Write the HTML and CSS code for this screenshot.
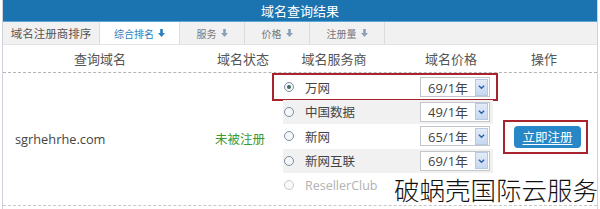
FILE: index.html
```html
<!DOCTYPE html>
<html lang="zh-CN">
<head>
<meta charset="utf-8">
<title>域名查询结果</title>
<link rel="stylesheet" href="styles.css">
</head>
<body>
<div class="panel">
  <div class="title">域名查询结果</div>
  <div class="tabs">
    <div class="tab tab-label">域名注册商排序</div>
    <div class="tab tab-active">综合排名 <svg class="arr" viewBox="0 0 8 9"><path d="M2.5 0h3v4.5H8L4 9 0 4.5h2.5z"/></svg></div>
    <div class="tab tab-w65">服务 <svg class="arr" viewBox="0 0 8 9"><path d="M2.5 0h3v4.5H8L4 9 0 4.5h2.5z"/></svg></div>
    <div class="tab tab-w65">价格 <svg class="arr" viewBox="0 0 8 9"><path d="M2.5 0h3v4.5H8L4 9 0 4.5h2.5z"/></svg></div>
    <div class="tab tab-w75">注册量 <svg class="arr" viewBox="0 0 8 9"><path d="M2.5 0h3v4.5H8L4 9 0 4.5h2.5z"/></svg></div>
  </div>
  <div class="thead">
    <div class="th">查询域名</div>
    <div class="th">域名状态</div>
    <div class="th">域名服务商</div>
    <div class="th">域名价格</div>
    <div class="th th-op">操作</div>
  </div>
  <div class="tbody">
    <div class="c-domain">sgrhehrhe.com</div>
    <div class="c-status">未被注册</div>
    <div class="c-prov">
      <div class="prow prow-hl">
        <span class="radio radio-on"></span><span class="pname">万网</span>
        <span class="sel"><span class="sel-val">69/1年</span><span class="sel-btn"><svg viewBox="0 0 8 6"><path d="M1 1.5l3 3 3-3" fill="none" stroke-width="1.6"/></svg></span></span>
      </div>
      <div class="prow prow-alt">
        <span class="radio"></span><span class="pname">中国数据</span>
        <span class="sel"><span class="sel-val">49/1年</span><span class="sel-btn"><svg viewBox="0 0 8 6"><path d="M1 1.5l3 3 3-3" fill="none" stroke-width="1.6"/></svg></span></span>
      </div>
      <div class="prow">
        <span class="radio"></span><span class="pname">新网</span>
        <span class="sel"><span class="sel-val">65/1年</span><span class="sel-btn"><svg viewBox="0 0 8 6"><path d="M1 1.5l3 3 3-3" fill="none" stroke-width="1.6"/></svg></span></span>
      </div>
      <div class="prow prow-alt">
        <span class="radio"></span><span class="pname">新网互联</span>
        <span class="sel"><span class="sel-val">69/1年</span><span class="sel-btn"><svg viewBox="0 0 8 6"><path d="M1 1.5l3 3 3-3" fill="none" stroke-width="1.6"/></svg></span></span>
      </div>
      <div class="prow prow-dis">
        <span class="radio radio-dis"></span><span class="pname">ResellerClub</span>
      </div>
    </div>
    <div class="c-op">
      <span class="hl-box"><a class="btn">立即注册</a></span>
    </div>
  </div>
  <div class="watermark">破蜗壳国际云服务</div>
</div>
</body>
</html>
```

FILE: styles.css
```css
* { box-sizing: border-box; }
html, body { margin: 0; padding: 0; background: #fff; }
body {
  font-family: "Open Sans", "Noto Sans CJK SC", sans-serif;
  color: #444;
  width: 600px;
  height: 209px;
  overflow: hidden;
}
.panel {
  position: relative;
  margin-left: 2px;
  width: 596px;
  height: 209px;
  border-left: 1px solid #cdd3d8;
  border-right: 1px solid #cdd3d8;
}
.title {
  height: 22px;
  line-height: 22px;
  background: #1b74b0;
  color: #fff;
  font-family: "Noto Sans CJK SC", sans-serif;
  font-size: 13px;
  text-align: center;
  border-bottom: 1px solid #5ea6d4;
}
.tabs {
  display: flex;
  height: 23px;
  background: #f1f1f1;
  border-bottom: 1px solid #e2e2e2;
}
.tab {
  display: flex;
  align-items: center;
  justify-content: center;
  gap: 4px;
  border-right: 1px solid #dcdcdc;
  font-family: "Noto Sans CJK SC", sans-serif;
  font-size: 10px;
  color: #777;
}
.tab-label { width: 97px; font-size: 11.5px; color: #555; }
.tab-active { width: 80px; background: #fff; color: #2c7fbf; }
.tab-w65 { width: 65px; }
.tab-w75 { width: 75px; }
.arr { width: 7px; height: 8px; fill: #8aa0b8; }
.tab-active .arr { fill: #2c7fbf; }
.thead {
  display: grid;
  grid-template-columns: 194px 92px 90px 144px 1fr;
  height: 28px;
  align-items: center;
  border-bottom: 1px dashed #b5b5b5;
}
.th {
  text-align: center;
  font-family: "Noto Sans CJK SC", sans-serif;
  font-size: 13px;
  color: #555;
}
.th-op { text-align: left; padding-left: 8px; }
.tbody {
  display: grid;
  grid-template-columns: 194px 86px 214px 1fr;
  border-bottom: 1px dashed #c8c8c8;
}
.c-domain {
  align-self: center;
  padding-left: 12px;
  font-family: "Open Sans", sans-serif;
  font-size: 12.8px;
  color: #444;
}
.c-status {
  align-self: center;
  text-align: center;
  font-family: "Noto Sans CJK SC", sans-serif;
  font-size: 12.5px;
  color: #3a9b33;
}
.c-prov {
  padding: 2px 0 7px;
}
.prow {
  position: relative;
  display: flex;
  align-items: center;
  width: 210px;
  height: 24.5px;
  padding-left: 1px;
}
.prow-alt { background: #f1f1f1; }
.prow-hl::after {
  content: "";
  position: absolute;
  top: -2px;
  left: -11px;
  right: -5px;
  bottom: -1px;
  border: 2px solid #a8232d;
}
.radio {
  width: 10px;
  height: 10px;
  border-radius: 50%;
  border: 1px solid #7d8ea3;
  background: #f4f6f8;
  margin-right: 11px;
  display: flex;
  align-items: center;
  justify-content: center;
}
.radio-on::after {
  content: "";
  width: 4px;
  height: 4px;
  border-radius: 50%;
  background: #3f6b57;
}
.radio-dis { border-color: #c4c9cf; background: #fafafa; }
.pname {
  font-family: "Noto Sans CJK SC", sans-serif;
  font-size: 12.5px;
  color: #444;
}
.prow-dis .pname {
  font-family: "Open Sans", sans-serif;
  color: #b2b2b2;
  font-size: 12.5px;
}
.sel {
  margin-left: auto;
  margin-right: 3px;
  width: 70px;
  height: 20px;
  display: flex;
  align-items: center;
  background: #fff;
  border: 1px solid #c3c7cc;
}
.sel-val {
  flex: 1;
  padding-left: 7px;
  font-family: "Open Sans", "Noto Sans CJK SC", sans-serif;
  font-size: 13px;
  color: #444;
}
.sel-btn {
  width: 13px;
  height: 17px;
  margin-right: 1px;
  background: linear-gradient(#e3ecf8, #c6d8f0);
  border: 1px solid #b6c8e2;
  display: flex;
  align-items: center;
  justify-content: center;
}
.sel-btn svg { width: 7px; height: 6px; stroke: #2f5fa8; }
.c-op {
  display: flex;
  align-items: flex-start;
  padding-top: 47px;
  padding-left: 6px;
}
.hl-box {
  display: inline-flex;
  border: 2px solid #a8232d;
  padding: 4px 5px 4px 9px;
}
.btn {
  display: inline-block;
  width: 67px;
  height: 22px;
  line-height: 22px;
  background: #2887c6;
  border-radius: 4px;
  color: #fff;
  text-align: center;
  font-family: "Noto Sans CJK SC", sans-serif;
  font-size: 12.5px;
  text-decoration: underline;
  text-underline-offset: 2px;
}
.watermark {
  position: absolute;
  left: 391px;
  top: 176px;
  font-family: "Noto Sans CJK SC", sans-serif;
  font-weight: 300;
  font-size: 25.5px;
  line-height: 1;
  color: #111;
  white-space: nowrap;
}
```
